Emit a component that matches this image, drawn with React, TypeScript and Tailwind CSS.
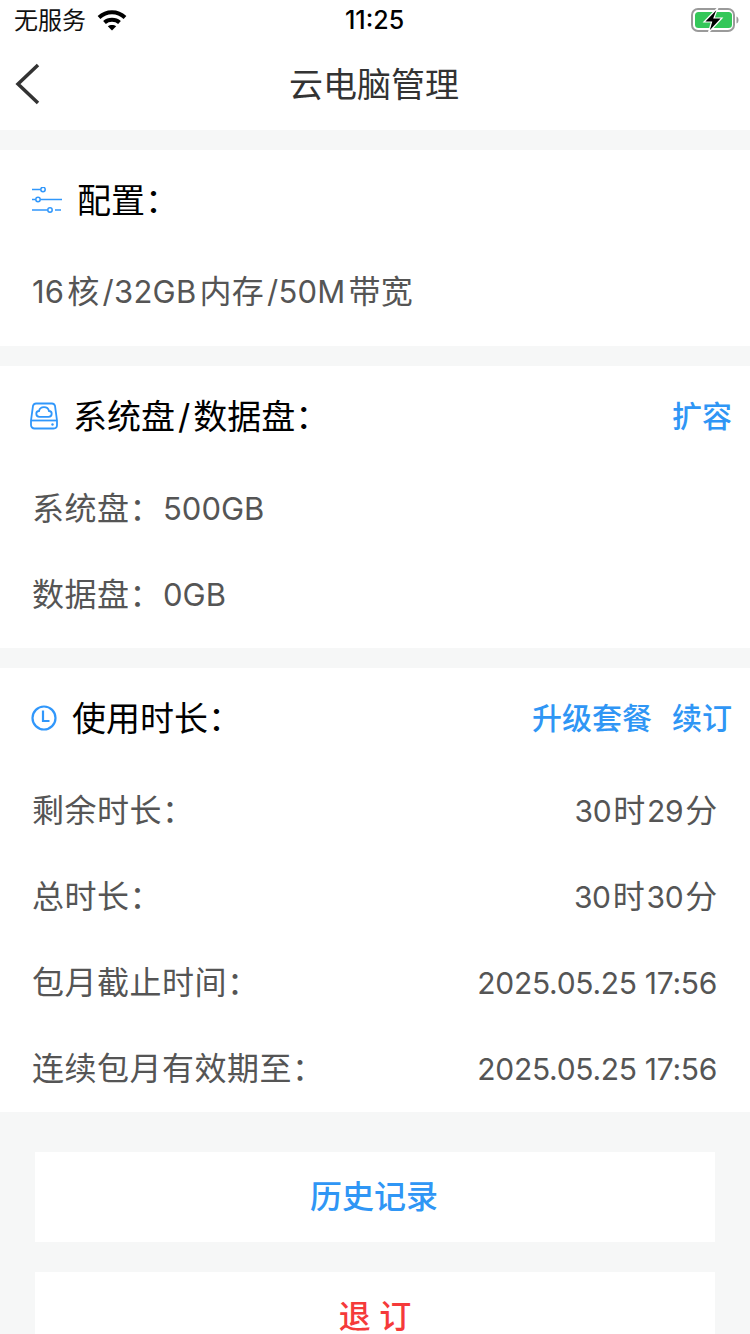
const font = { fontFamily: 'Inter, "Noto Sans CJK SC", "Noto Sans", sans-serif' };

function Wifi() {
  return (
    <svg className="-mt-[1px]" width="30" height="22" viewBox="0 0 30 22" fill="none" stroke="#000" strokeWidth="4">
      <path d="M2 8.500C9.500 1.500 20.500 1.500 28 8.500" />
      <path d="M7.500 13.500C11.500 9.800 18.500 9.800 22.500 13.500" />
      <path d="M15 21.500L10.800 17.300C13 15.500 17 15.500 19.200 17.300Z" fill="#000" stroke="none" />
    </svg>
  );
}

function Battery() {
  return (
    <svg className="-mt-[2px]" width="48" height="26" viewBox="0 0 48 26" fill="none">
      <rect x="1" y="2" width="42" height="22" rx="6" stroke="#9a9a9a" strokeWidth="2" />
      <rect x="4" y="5" width="37" height="16" rx="3.500" fill="#34c759" />
      <path d="M45.500 9.500c1.500.5 2 2 2 3.500s-.5 3-2 3.500z" fill="#9a9a9a" />
      <path d="M27 0.500L13 15h7.500l-3 10.500L31 11h-8L27 0.500z" fill="#000" stroke="#fff" strokeWidth="1.200" />
    </svg>
  );
}

function SlidersIcon() {
  return (
    <svg width="30" height="26" viewBox="0 0 30 26" fill="none" stroke="#3097fb" strokeWidth="1.500">
      <path d="M0 2.500H8.500M0 12.500H3.500M8.500 12.500H30M0 23H15.500M23 23H29" />
      <circle cx="11" cy="2.500" r="2.200" />
      <circle cx="6" cy="12.500" r="2.200" />
      <circle cx="18" cy="23" r="2.200" />
    </svg>
  );
}

function DiskIcon() {
  return (
    <svg width="28" height="28" viewBox="0 0 28 28" fill="none" stroke="#3097fb" strokeWidth="1.800">
      <path d="M6 1.500H22C23.500 1.500 24.500 2.300 25 3.800L27 18.500V23C27 25 25.500 26.500 23.500 26.500H4.500C2.500 26.500 1 25 1 23V18.500L3 3.800C3.500 2.300 4.500 1.500 6 1.500Z" />
      <path d="M1 18.500H27" />
      <path d="M9.500 14.800C7.300 14.800 6.300 13.300 6.300 11.800C6.300 10.200 7.500 9 9 9C9.500 6.700 11.500 5.200 14 5.200C16.800 5.200 18.500 7 19 9C20.500 9 21.700 10.200 21.700 11.800C21.700 13.300 20.700 14.800 18.500 14.800Z" />
      <circle cx="22.500" cy="22.500" r="1.200" fill="#3097fb" stroke="none" />
    </svg>
  );
}

function ClockIcon() {
  return (
    <svg width="26" height="26" viewBox="0 0 26 26" fill="none" stroke="#3097fb" strokeWidth="2.200">
      <circle cx="13" cy="13" r="11.500" />
      <path d="M12 5.500V16H18.500" />
    </svg>
  );
}

// iOS puts a thin gap between CJK and latin runs
function Cjk({ children }: { children: string }) {
  return <span className="mx-[3px] text-[32px]">{children}</span>;
}

function Row({ label, value }: { label: React.ReactNode; value?: React.ReactNode }) {
  return (
    <div className="flex h-[86px] items-center justify-between pl-[32px] pr-[33px] text-[#555555]">
      <span className="text-[32px] tracking-[0.5px]">{label}</span>
      {value && <span className="text-[30px] tracking-[-0.3px]">{value}</span>}
    </div>
  );
}

function Hours({ h, m }: { h: string; m: string }) {
  return (
    <>
      {h}
      <span className="mx-[2px] text-[32px]">时</span>
      {m}
      <span className="ml-[2px] text-[32px]">分</span>
    </>
  );
}

export default function App() {
  return (
    <div className="h-[1334px] w-[750px] overflow-hidden bg-[#f6f7f7]" style={font}>
      {/* Status bar */}
      <div className="bg-white">
        <div className="flex h-[42px] items-center justify-between pb-[1px] pl-[14px] pr-[11px]">
          <div className="flex w-[200px] items-center gap-[11px] text-[24px] text-[#111]">
            <span>无服务</span>
            <Wifi />
          </div>
          <span className="pr-[4px] text-[25px] font-medium text-black">11:25</span>
          <div className="flex w-[200px] justify-end">
            <Battery />
          </div>
        </div>

        {/* Nav */}
        <div className="relative flex h-[88px] items-center justify-center pb-[4px] pr-[2px]">
          <svg className="absolute left-[14px] top-[21px]" width="28" height="42" viewBox="0 0 28 42" fill="none" stroke="#333" strokeWidth="3.500">
            <path d="M24 2L4 21L24 40" />
          </svg>
          <span className="text-[34px] text-[#333]">云电脑管理</span>
        </div>
      </div>

      {/* Config */}
      <div className="mt-5 h-[196px] bg-white">
        <div className="flex h-[100px] items-center gap-[15px] pl-[32px]">
          <SlidersIcon />
          <span className="text-[34px] text-black">配置：</span>
        </div>
        <div className="flex h-[86px] items-center pb-[2px] pl-[32px] text-[31px] tracking-[0.25px] text-[#555]">
          <span>
            16<Cjk>核</Cjk>/32GB<Cjk>内存</Cjk>/50M<Cjk>带宽</Cjk>
          </span>
        </div>
      </div>

      {/* Disks */}
      <div className="mt-5 h-[282px] bg-white">
        <div className="flex h-[100px] items-center justify-between pl-[30px] pr-[18px]">
          <div className="flex items-center gap-[15px]">
            <DiskIcon />
            <span className="text-[34px] text-black">
              系统盘<span className="mx-[3px]">/</span>数据盘：
            </span>
          </div>
          <span className="text-[30px] font-medium text-[#2f96f5]">扩容</span>
        </div>
        <Row label={<>系统盘：<span className="ml-[1px] text-[31px] tracking-normal">500GB</span></>} />
        <Row label={<>数据盘：<span className="ml-[1px] text-[31px] tracking-normal">0GB</span></>} />
      </div>

      {/* Duration */}
      <div className="mt-5 h-[444px] bg-white">
        <div className="flex h-[100px] items-center justify-between pl-[31px] pr-[18px]">
          <div className="flex items-center gap-[15px]">
            <ClockIcon />
            <span className="text-[34px] text-black">使用时长：</span>
          </div>
          <div className="flex gap-5 text-[30px] font-medium text-[#2f96f5]">
            <span>升级套餐</span>
            <span>续订</span>
          </div>
        </div>
        <Row label="剩余时长：" value={<Hours h="30" m="29" />} />
        <Row label="总时长：" value={<Hours h="30" m="30" />} />
        <Row label="包月截止时间：" value="2025.05.25 17:56" />
        <Row label="连续包月有效期至：" value="2025.05.25 17:56" />
      </div>

      {/* Actions */}
      <div className="mx-[35px] mt-10 flex flex-col gap-[30px]">
        <button className="h-[90px] bg-white pr-[2px] text-[32px] font-medium text-[#2f96f5]">历史记录</button>
        <button className="h-[90px] bg-white text-[32px] font-medium text-[#f53a3a]">退 订</button>
      </div>
    </div>
  );
}
